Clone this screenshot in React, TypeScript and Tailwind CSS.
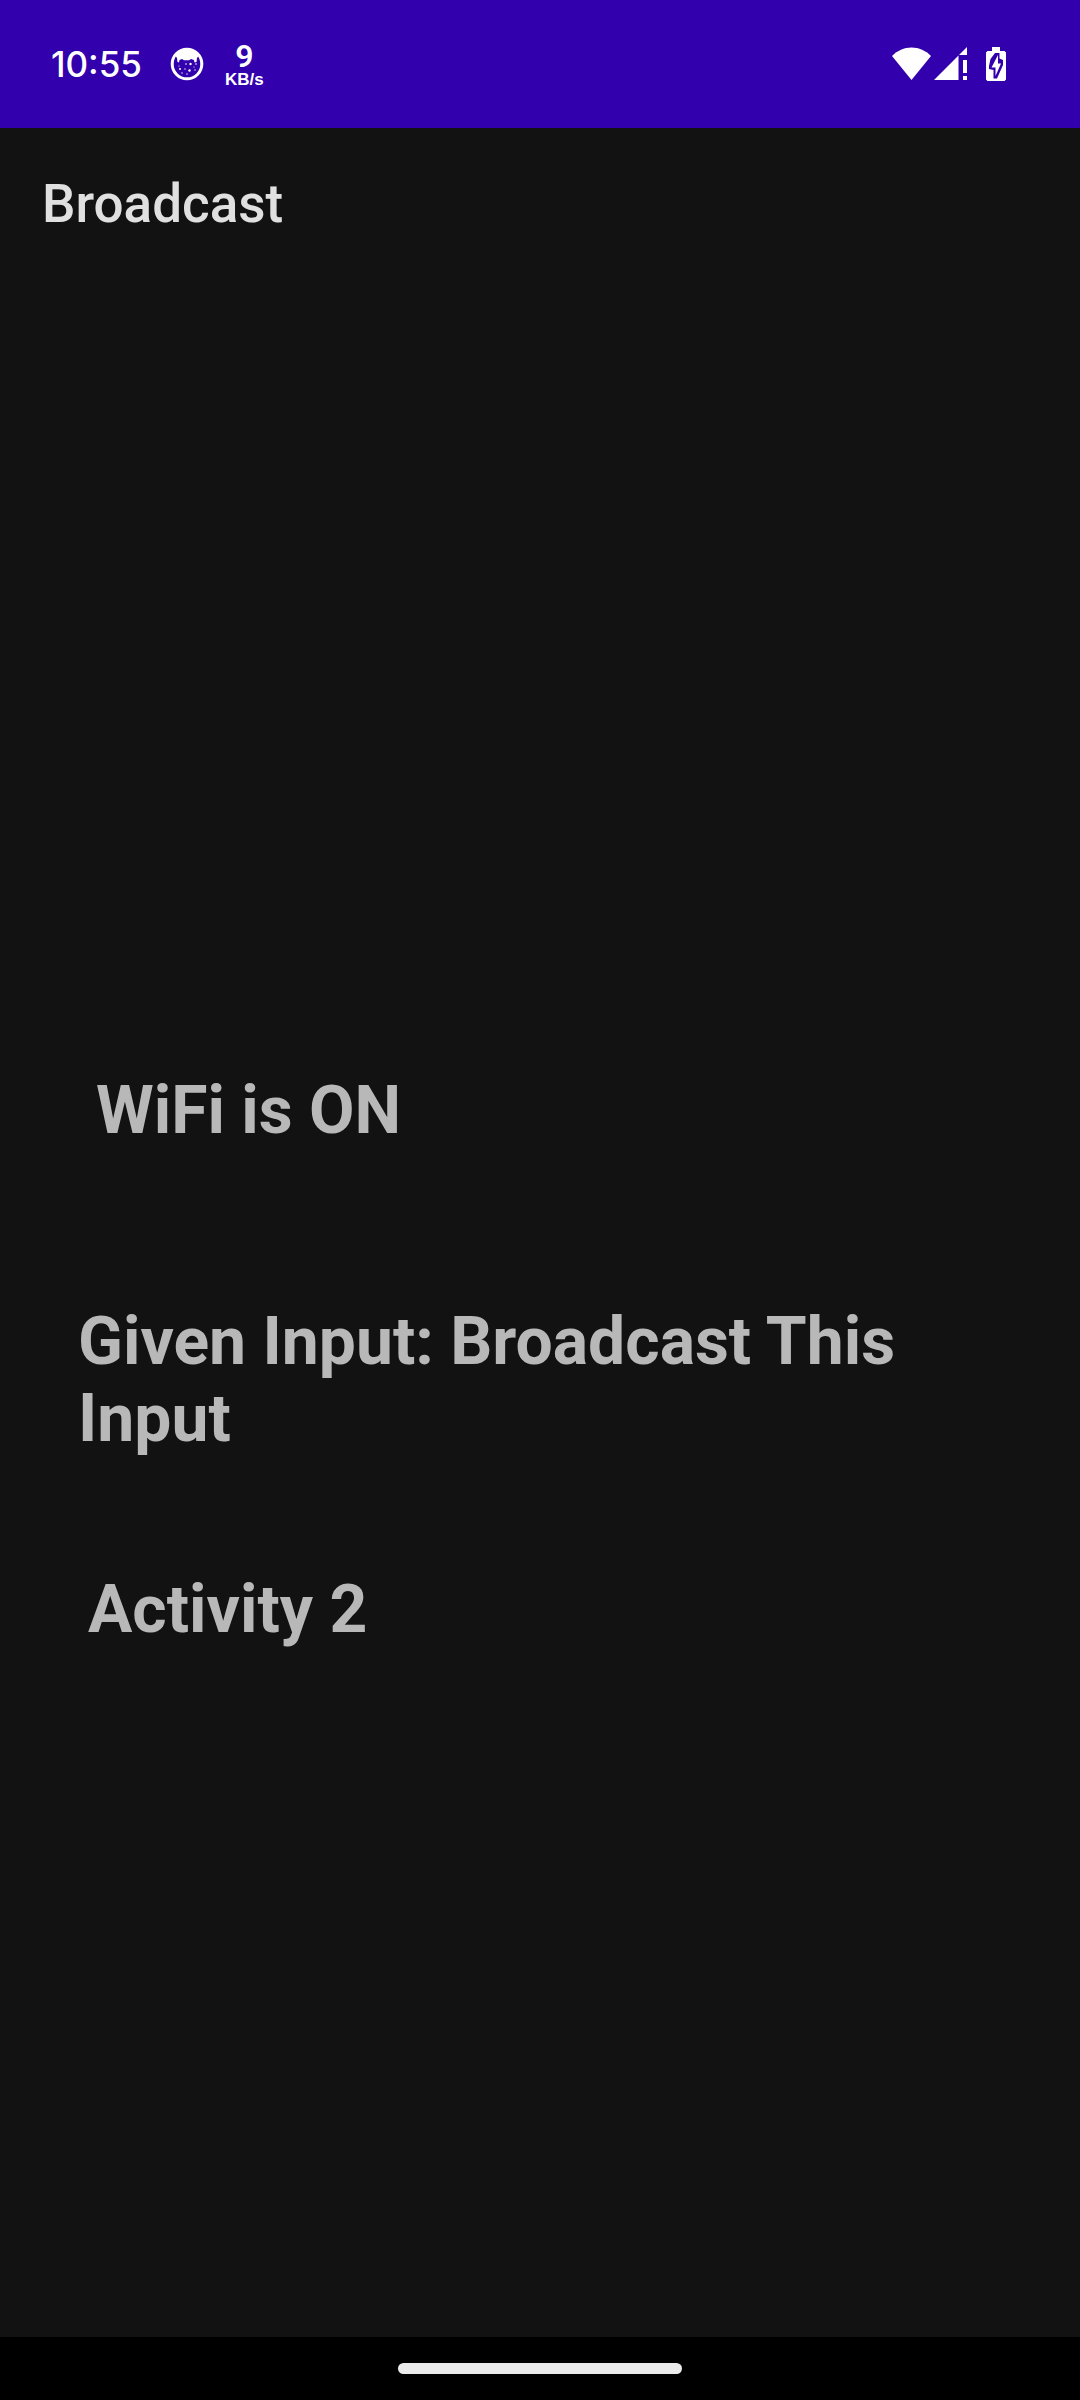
function FaceIcon() {
  return (
    <svg className="h-[34px] w-[34px]" viewBox="0 0 34 34" role="img" aria-label="App notification">
      <circle cx="17" cy="17" r="14.800" fill="none" stroke="#fff" strokeWidth="3" />
      <path
        d="M5.500 9C8 4 12 2 17 2s9 2 11.500 7L27 11l-.5 4-2 .5-.5-2.500-3-1-2 1.200h-5L12 12l-2.500 1-.5 2.500-1.500-.5L7 11z"
        fill="#fff"
      />
      <g fill="#fff">
        <circle cx="9" cy="19" r="0.600" />
        <circle cx="10" cy="22" r="1" />
        <circle cx="16" cy="17" r="0.800" />
        <circle cx="20.500" cy="17" r="1.200" />
        <circle cx="15" cy="22" r="0.700" />
        <circle cx="19.500" cy="23.500" r="1.200" />
        <circle cx="24" cy="20" r="0.600" />
        <circle cx="26" cy="17" r="0.800" />
        <circle cx="25" cy="23" r="0.700" />
        <circle cx="12" cy="26" r="0.700" />
        <circle cx="17" cy="27" r="0.700" />
      </g>
    </svg>
  );
}

function WifiIcon() {
  return (
    <svg className="h-[34px] w-10" viewBox="0 0 40 34" role="img" aria-label="Wi-Fi">
      <path d="M19.500 33L0 9C5.500 3.500 12 .5 19.500 .5S33.500 3.500 39 9z" fill="#fff" />
    </svg>
  );
}

function SignalIcon() {
  return (
    <svg className="h-[34px] w-[34px]" viewBox="0 0 34 34" role="img" aria-label="Mobile signal">
      <path d="M0 33L24.500 8.500V33zM25 8L33 0v8zM29 13h4v13h-4zM29 29h4v4h-4z" fill="#fff" />
    </svg>
  );
}

function BatteryIcon() {
  return (
    <svg className="h-[34px] w-5" viewBox="0 0 20 34" role="img" aria-label="Battery charging">
      <path d="M6 0h8v4h4.500L20 5.500v27L18.500 34h-17L0 32.500v-27L1.500 4H6z" fill="#fff" />
      <path d="M9 6h4.500v5.500L17 13v5L11 31.500H7.500V23L3 22v-3l1.500-7z" fill="#3200ad" />
      <path d="M12 8L5.500 20.500H9.500V29L15 16.500H12z" fill="#fff" />
    </svg>
  );
}

export default function App() {
  return (
    <div className="flex min-h-screen flex-col bg-[#121212] font-['Roboto',sans-serif]">
      <header className="flex h-32 items-center justify-between bg-[#3200ad] pr-[74px] pl-[51px] text-white">
        <div className="flex items-center">
          <time className="font-['Inter',sans-serif] text-[35px] leading-10 font-medium">10:55</time>
          <div className="ml-7">
            <FaceIcon />
          </div>
          <div className="ml-[21px] flex flex-col items-center">
            <span className="text-[32px] leading-8 font-semibold">9</span>
            <span className="font-['Liberation_Sans',sans-serif] text-[17px] leading-4 font-bold">KB/s</span>
          </div>
        </div>
        <div className="flex items-center">
          <WifiIcon />
          <div className="ml-0.5">
            <SignalIcon />
          </div>
          <div className="ml-[18px]">
            <BatteryIcon />
          </div>
        </div>
      </header>

      <h1 className="px-[42px] pt-11 text-[53px] leading-16 font-medium text-[#e0e0e0]">Broadcast</h1>

      <main className="flex grow flex-col px-[78px] pt-[836px] text-[66px] leading-[77px] font-bold text-[#b8b8b8]">
        <p className="pl-[18px]">WiFi is ON</p>
        <p className="mt-[154px] max-w-[920px]">Given Input: Broadcast This Input</p>
        <p className="mt-[114px] pl-2.5">Activity 2</p>
      </main>

      <footer className="flex h-[63px] items-center justify-center bg-black">
        <div className="h-[11px] w-[284px] rounded-full bg-[#ebebeb]" />
      </footer>
    </div>
  );
}
